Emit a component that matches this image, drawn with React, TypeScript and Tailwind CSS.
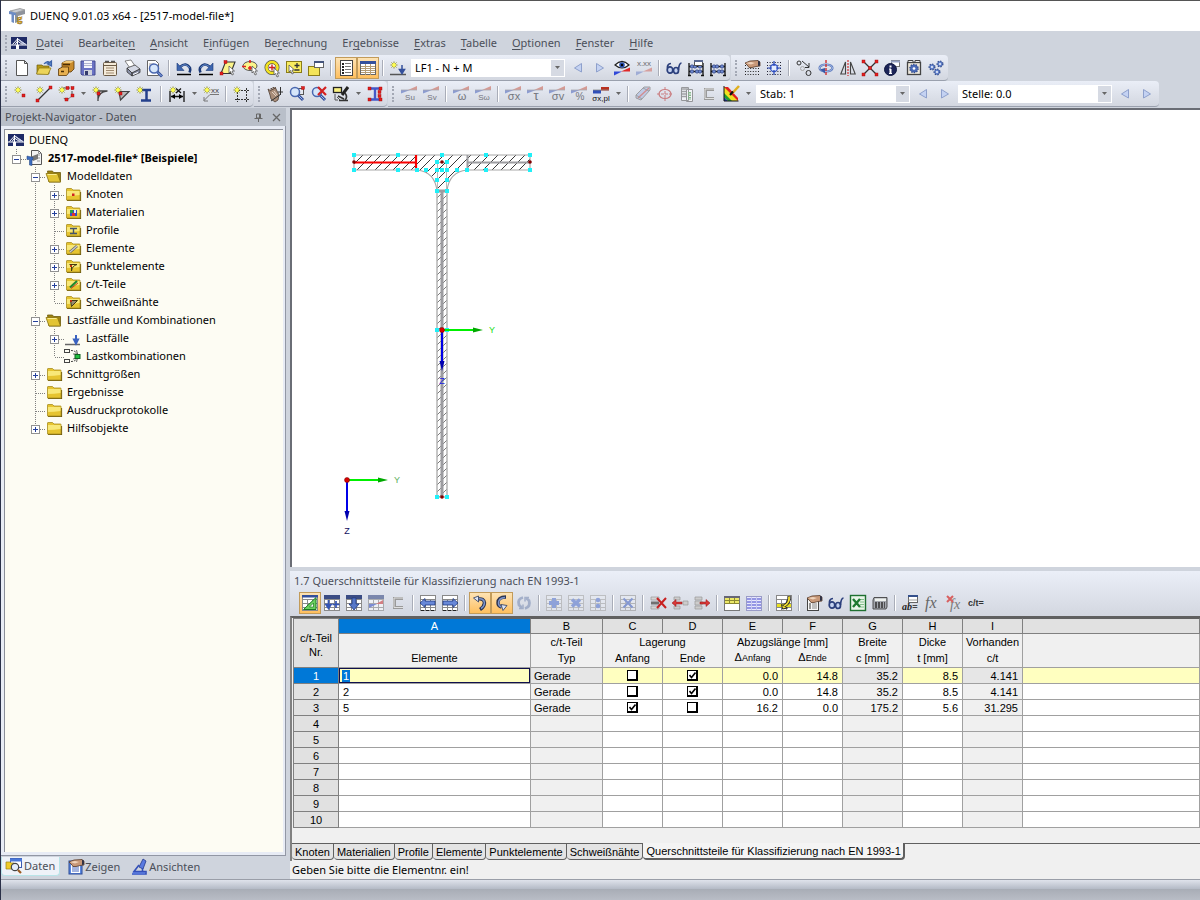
import type { ReactNode } from "react";

/* ---------- icon building blocks (16 x 16 grid) ---------- */

const Star = ({ x = 4, y = 4 }: { x?: number; y?: number }) => (
  <g>
    <path
      d={`M${x - 3.5} ${y}h7M${x} ${y - 3.5}v7M${x - 2.5} ${y - 2.5}l5 5M${x + 2.5} ${y - 2.5}l-5 5`}
      stroke="#8c8c1c"
      strokeWidth=".9"
    />
    <circle cx={x} cy={y} r="1.900" fill="#ffff50" />
  </g>
);

const Red = ({ at }: { at: number[][] }) => (
  <>
    {at.map(([x, y]) => (
      <rect key={`${x}-${y}`} x={x} y={y} width="3" height="3" fill="#e02020" stroke="#a00000" strokeWidth=".4" />
    ))}
  </>
);

const Cursor = ({ x = 8, y = 6 }: { x?: number; y?: number }) => (
  <path d={`M${x} ${y}v7l1.500-1.500 1.500 3.500 1.500-.7-1.500-3.300h2.500z`} fill="#fff" stroke="#555" strokeWidth=".8" />
);

const Lens = ({ x = 7, y = 6 }: { x?: number; y?: number }) => (
  <g>
    <path d={`M${x + 3} ${y + 3}l5 5`} stroke="#34509c" strokeWidth="3" />
    <path d={`M${x + 4} ${y + 4}l3.500 3.500`} stroke="#9cb8ec" strokeWidth="1" />
    <circle cx={x} cy={y} r="4.500" fill="#d6e6fa" stroke="#4a68b0" strokeWidth="1.500" />
  </g>
);

const Grid = ({ fill = "#fff", line = "#8a8a8a" }: { fill?: string; line?: string }) => (
  <g shapeRendering="crispEdges">
    <rect x=".5" y=".5" width="15" height="15" fill={fill} stroke={line} />
    <path d="M.5 4.500h15M.5 8.500h15M.5 12.500h15M5.500 4v12M10.500 4v12" stroke={line} />
  </g>
);

const GridTop = () => (
  <g>
    <Grid />
    <rect x="0" y="0" width="16" height="4" fill="#3a4c84" />
  </g>
);

const Wedge = ({ children }: { children: ReactNode }) => (
  <g>
    <path d="M0 4h9L0 7.500z" fill="#8c9cd0" />
    <path d="M7 4L16 0v4z" fill="#d49a94" />
    <path d="M0 4h16" stroke="#a8a8b0" strokeWidth=".8" />
    {children}
  </g>
);

const Sym = ({ t, size = 9 }: { t: string; size?: number }) => (
  <text x="9" y="14" fontSize={size} textAnchor="middle" fill="#74777e" fontFamily="Liberation Sans, sans-serif">
    {t}
  </text>
);

const Abacus = ({ y = 3 }: { y?: number }) => (
  <g>
    <path d={`M1 ${y}v13M15 ${y}v13M0 15.500h3M13 15.500h3M1 ${y + 3}.500h14M1 ${y + 8}.500h14`} stroke="#111" strokeWidth="1.300" />
    {[4, 7, 12].map((x) => (
      <circle key={x} cx={x} cy={y + 3.5} r="1.700" fill="#6f8ad0" stroke="#203070" strokeWidth=".6" />
    ))}
    {[4, 9, 12].map((x) => (
      <circle key={x} cx={x} cy={y + 8.5} r="1.700" fill="#6f8ad0" stroke="#203070" strokeWidth=".6" />
    ))}
  </g>
);

const Gear = ({ x, y, r, fill = "#6c8cd4" }: { x: number; y: number; r: number; fill?: string }) => (
  <g>
    <circle cx={x} cy={y} r={r} fill="none" stroke="#2c4888" strokeWidth="1.600" strokeDasharray="1.300 1.200" />
    <circle cx={x} cy={y} r={r - 0.3} fill={fill} stroke="#35519a" strokeWidth=".6" />
    <circle cx={x} cy={y} r={r / 3} fill="#fff" />
  </g>
);

const Dots = () => (
  <path
    d="M1 5.500h14M1 8.500h14M1 11.500h14M1 14.500h14"
    stroke="#222"
    strokeDasharray="1 1.600"
  />
);

const Hand = ({ y = 0 }: { y?: number }) => (
  <g>
    <path d={`M1 ${y + 3}l5-2 8-.5 2 2v3.500l-4 .5-4 1-3 0-1-1.500z`} fill="#c89878" stroke="#5a3c2a" strokeWidth=".8" />
    <path d={`M2 ${y + 3}l5-1 4 1-4 1.500z`} fill="#f0d4bc" />
    <path d={`M14 ${y}.5l2 1v4l-2 .5z`} fill="#334" />
  </g>
);

const GlassesShape = () => (
  <g fill="#c4d2f0" stroke="#2b3f7c" strokeWidth="1.700">
    <ellipse cx="4" cy="10" rx="2.800" ry="3.200" />
    <ellipse cx="10" cy="10.500" rx="2.500" ry="3" />
    <path d="M1.500 8Q1 4 5 3.500M12.500 10Q13 3 15.500 3M6.500 10h1" fill="none" />
  </g>
);

const FolderBase = ({ children }: { children?: ReactNode }) => (
  <g>
    <path d="M2 14.500h13.500V6" stroke="#6e5c10" strokeWidth="1.200" fill="none" />
    <path d="M1.500 3q0-.5.5-.5h4.500l1.500 1.500h6.500q.5 0 .5.500v9.500h-13.500z" fill="#e6c430" stroke="#a88e20" strokeWidth=".8" />
    <path d="M2 5h12.500v4Q8 10 2 10z" fill="#f8e878" />
    {children}
  </g>
);

const ICONS: Record<string, ReactNode> = {
  app: (
    <g>
      <path d="M1 3l10-2.500 5 1.500-10 3z" fill="#c9ccd2" stroke="#777" strokeWidth=".6" />
      <path d="M6 5l10-3v4L9 8v6l-3 1z" fill="#8e939c" />
      <path d="M0 3l7 2v2.500L5 7v8l-2.500-1V6.500L0 6z" fill="#6d8cc4" />
      <text x="8" y="14" fontSize="11" fontWeight="bold" fill="#e0a81c" stroke="#7a5a10" strokeWidth=".3" fontFamily="Liberation Serif, serif">g</text>
    </g>
  ),
  bridge: (
    <g>
      <rect x="0" y="2" width="16" height="12" fill="#1f2b66" />
      <path d="M0 10h16M6.500 3v11M1.500 9.500L6.500 4l8.500 5.500M4 9.500L6.500 6l5 3.500" stroke="#fff" strokeWidth="1" fill="none" />
      <path d="M6.500 3L15 9.500h-3z" fill="#c8d0ea" />
      <path d="M5 10h3v4H5z" fill="#fff" />
    </g>
  ),
  new: <path d="M2.500.5h8l3 3v12h-11zM10.500.5v3h3" fill="#fff" stroke="#555" />,
  open: (
    <g>
      <path d="M1 5h5l1 1h6v8H1z" fill="#b79a18" stroke="#6d5c0c" strokeWidth=".7" />
      <path d="M0.500 14L3 8h12l-3 6.500z" fill="#ecd458" stroke="#8a7410" strokeWidth=".7" />
      <path d="M8 4q3-4 6-1M15.500 1v5l-4-2z" stroke="#3c62a8" strokeWidth="1.200" fill="#5a86c8" />
    </g>
  ),
  archive: (
    <g>
      <path d="M4 3l4-2h8v8l-3 3H4z" fill="#c98b2c" stroke="#5b3808" strokeWidth=".8" />
      <path d="M8 1h8l-3 2H4z" fill="#f0c878" />
      <path d="M0.500 9l4-2h6v6l-2 2.500h-8z" fill="#e7b050" stroke="#5b3808" strokeWidth=".8" />
      <path d="M5 4.500h7M3 11.500h3" stroke="#4a2e06" strokeWidth="1.400" />
    </g>
  ),
  save: (
    <g>
      <path d="M1 1h14v14H2l-1-1z" fill="#6a72c4" stroke="#444a90" />
      <rect x="4" y="1" width="8" height="7" fill="#f4f4fb" />
      <path d="M4 3.500h8M4 5.500h8" stroke="#b0b4d0" />
      <rect x="4" y="10" width="8" height="5" fill="#d0d3dc" />
      <rect x="5" y="11" width="3" height="4" fill="#343a6c" />
    </g>
  ),
  notes: (
    <g>
      <rect x="1.500" y="2.500" width="13" height="13" rx="1" fill="#f4ead8" stroke="#6b5a44" />
      <path d="M1 5.500h14" stroke="#6b5a44" />
      <path d="M3 1.500h4M9 1.500h4" stroke="#555" strokeWidth="1.500" />
      <path d="M4 8h8M4 10.500h8M4 13h8" stroke="#a08a70" />
    </g>
  ),
  print: (
    <g>
      <path d="M1 1l6-1 4 6-5 2z" fill="#fff" stroke="#666" strokeWidth=".8" />
      <path d="M3 8l8-3 5 4-8 4z" fill="#d4d8e4" stroke="#444" strokeWidth=".8" />
      <path d="M3 8v4l5 4v-3zM8 13v3l8-3.500V9z" fill="#8c93aa" stroke="#333" strokeWidth=".8" />
      <path d="M9 14.500l5-2" stroke="#fff" />
    </g>
  ),
  preview: (
    <g>
      <path d="M1.500.5h8l3 3v12h-11z" fill="#fff" stroke="#666" />
      <path d="M3 4h5M3 6h7M3 8h4" stroke="#999" />
      <Lens x={8} y={8.5} />
    </g>
  ),
  undo: (
    <g>
      <path d="M4 7Q10 1.500 14 8q.8 2-.5 4.500" stroke="#1c3a78" strokeWidth="2.600" fill="none" />
      <path d="M4 7Q10 2 13.500 8" stroke="#6c94d4" strokeWidth="1" fill="none" />
      <path d="M1 3v7.500h7z" fill="#3d66b0" stroke="#1c3a78" strokeWidth=".6" />
      <path d="M1 14.500h14" stroke="#000" strokeWidth="1.500" />
    </g>
  ),
  redo: (
    <g>
      <path d="M12 7Q6 1.500 2 8q-.8 2 .5 4.500" stroke="#1c3a78" strokeWidth="2.600" fill="none" />
      <path d="M12 7Q6 2 2.500 8" stroke="#6c94d4" strokeWidth="1" fill="none" />
      <path d="M15 3v7.500H8z" fill="#3d66b0" stroke="#1c3a78" strokeWidth=".6" />
      <path d="M1 14.500h14" stroke="#000" strokeWidth="1.500" />
    </g>
  ),
  selPar: (
    <g>
      <path d="M5.500 2h9.500L10.500 13.500H1z" fill="#fbf48a" stroke="#333" strokeWidth="1.100" />
      <Red at={[[4, 0.5], [0, 12]]} />
      <Cursor x={9} y={6} />
    </g>
  ),
  selEll: (
    <g>
      <ellipse cx="8" cy="6" rx="7" ry="4.500" fill="#fbf48a" stroke="#555" />
      <path d="M0 6.500h4M8 0v3M6 8h4M8 6v4" stroke="#e02020" strokeWidth="1.600" />
      <Cursor x={10} y={6} />
    </g>
  ),
  selRing: (
    <g>
      <circle cx="8" cy="7.500" r="5.500" fill="#fff" stroke="#554" strokeWidth="4" />
      <circle cx="8" cy="7.500" r="5.500" fill="none" stroke="#f4e420" strokeWidth="2.600" />
      <path d="M8 4.500v6M5 7.500h6" stroke="#d02020" strokeWidth="1.400" />
      <Cursor x={10} y={8} />
    </g>
  ),
  selPlus: (
    <g>
      <rect x=".5" y="1.500" width="15" height="11" fill="#f8ec60" stroke="#8a7c18" />
      <path d="M11 3v5M8.500 5.500h5M8.500 10h5" stroke="#333" strokeWidth="1.300" />
      <Cursor x={3} y={5} />
    </g>
  ),
  windows: (
    <g>
      <rect x=".5" y="6.500" width="11" height="9" fill="#f4e458" stroke="#8a7c18" />
      <rect x="6.500" y="1.500" width="9" height="6" fill="#fff" stroke="#666" />
      <path d="M6 2h10" stroke="#44547c" strokeWidth="2" />
    </g>
  ),
  listPane: (
    <g shapeRendering="crispEdges">
      <rect x="2.500" y=".5" width="12" height="15" fill="#fff" stroke="#444" />
      <path d="M4 3.500h2M4 6.500h2M4 9.500h2M4 12.500h2" stroke="#222" strokeWidth="2" />
      <path d="M7 3.500h6M7 6.500h6M7 9.500h6M7 12.500h6" stroke="#777" />
    </g>
  ),
  tablePane: (
    <g shapeRendering="crispEdges">
      <rect x=".5" y="1.500" width="15" height="13" fill="#fff" stroke="#666" />
      <rect x="0" y="1" width="16" height="3" fill="#34509c" />
      <path d="M1 6.500h14M1 8.500h14M1 10.500h14M1 12.500h14M5.500 4v11M10.500 4v11" stroke="#b49c74" />
    </g>
  ),
  newLoad: (
    <g>
      <Star x={4} y={5} />
      <path d="M0 14.500h16" stroke="#555" strokeWidth="1.500" />
      <path d="M12 5v5M9.500 9.500l2.500 4 2.500-4z" stroke="#34509c" strokeWidth="1.500" fill="#34509c" />
    </g>
  ),
  prev: <path d="M11.500 3.500v8.500L4.500 8z" fill="#c4d2f2" stroke="#8ea0cc" />,
  next: <path d="M4.500 3.500v8.500l7-4z" fill="#c4d2f2" stroke="#8ea0cc" />,
  eye: (
    <g>
      <path d="M0 11.500h8L0 15.500z" fill="#3048d8" />
      <path d="M7 11.500L16 7.500v4z" fill="#e02828" />
      <path d="M1 5q7-7 14 0q-7 6-14 0z" fill="#fff" stroke="#222" strokeWidth="1.200" />
      <circle cx="8" cy="5" r="2.800" fill="#2850b0" />
      <circle cx="8" cy="5" r="1.200" fill="#000" />
    </g>
  ),
  xxx: (
    <g opacity=".75">
      <text x="8" y="6" fontSize="8" textAnchor="middle" fill="#444" fontFamily="Liberation Sans, sans-serif">x.xx</text>
      <path d="M0 11.500h8L0 15.500z" fill="#8c9cd0" />
      <path d="M7 11.500L16 7.500v4z" fill="#d48a84" />
    </g>
  ),
  glasses: <GlassesShape />,
  abacusWin: (
    <g>
      <Abacus />
      <rect x="6.500" y=".5" width="8" height="5" fill="#fff" stroke="#555" />
      <path d="M6 1h9" stroke="#5a6890" strokeWidth="2" />
    </g>
  ),
  abacus: <Abacus />,
  gridHand: (
    <g>
      <Dots />
      <Hand />
    </g>
  ),
  gridSnap: (
    <g>
      <path d="M1 2.500h14M1 5.500h14M1 8.500h14M1 11.500h14M1 14.500h14" stroke="#223" strokeDasharray="1 1.600" />
      <circle cx="8" cy="8" r="3.500" fill="#e4ecff" stroke="#3858c8" strokeWidth="1.300" />
      <path d="M8 1v5M8 10v5M1 8h5M10 8h5" stroke="#2848b8" strokeWidth="1.200" />
    </g>
  ),
  move: (
    <g fill="none" stroke="#333">
      <circle cx="3" cy="3" r="2" />
      <circle cx="12.500" cy="13" r="2.500" />
      <circle cx="6.500" cy="8.500" r="2" stroke="#aaa" />
      <path d="M6 1l7 6M13 3v4.500H9" />
    </g>
  ),
  rotate: (
    <g fill="none">
      <ellipse cx="8" cy="8" rx="6.500" ry="3.500" stroke="#5a78bc" strokeWidth="2.200" />
      <ellipse cx="8" cy="8" rx="6.500" ry="3.500" stroke="#b4c6ec" strokeWidth=".8" />
      <path d="M2 9.500l5-1.500v5.500z" fill="#3a5aa8" />
      <path d="M8 0v16" stroke="#d02020" strokeWidth="1.300" strokeDasharray="3 1" />
    </g>
  ),
  mirror: (
    <g fill="none" stroke="#444" strokeWidth="1.100">
      <path d="M5.500 2v12H.8zM10.500 2v12h4.700z" />
      <path d="M8 0v16" stroke="#d02020" strokeDasharray="2 1" />
    </g>
  ),
  explode: (
    <g>
      <path d="M1 1l14 14M15 1L1 15" stroke="#333" strokeWidth="1.300" />
      <Red at={[[0, 0], [13, 0], [0, 13], [13, 13], [6.5, 6.5]]} />
    </g>
  ),
  info: (
    <g>
      <rect x="7.500" y=".5" width="8" height="6" fill="#fff" stroke="#777" />
      <path d="M7 1.500h9" stroke="#98a4c4" strokeWidth="2" />
      <circle cx="6.500" cy="9.500" r="6" fill="#1c2458" stroke="#101840" />
      <path d="M6.500 5.500v2M6.500 9v4.500" stroke="#fff" strokeWidth="2" />
      <path d="M5 9h2M5 13.500h3" stroke="#fff" />
    </g>
  ),
  settings: (
    <g>
      <rect x="1.500" y="2.500" width="13" height="12" fill="#eee8dc" stroke="#444" strokeWidth="1.300" />
      <path d="M2 2V.5h5V2M9 2V.5h5V2" stroke="#444" fill="#eee" />
      <Gear x={8} y={8.5} r={4} fill="#4c6cb8" />
    </g>
  ),
  gears: (
    <g>
      <Gear x={4} y={7} r={2.7} />
      <Gear x={12} y={4} r={2.7} />
      <Gear x={9} y={12} r={2.7} />
    </g>
  ),
  nNode: (
    <g>
      <Star x={4} y={4} />
      <Red at={[[8, 8]]} />
    </g>
  ),
  nLine: (
    <g>
      <path d="M2 14L14 2" stroke="#333" strokeWidth="1.200" />
      <Star x={4} y={4} />
      <Red at={[[0, 13], [13, 0]]} />
    </g>
  ),
  nPoly: (
    <g>
      <path d="M5 2h9v8l-5 4-4-2" stroke="#555" fill="none" strokeDasharray="3 1" />
      <Star x={4} y={4} />
      <Red at={[[8, 0.5], [13, 0.5], [13, 8], [7, 12]]} />
    </g>
  ),
  nTriA: (
    <g>
      <path d="M3 5h12.500M6 15V7M6 13Q7 6 15 5" stroke="#444" strokeWidth="1.300" fill="none" />
      <Star x={4} y={4} />
      <Red at={[[5, 6]]} />
    </g>
  ),
  nTriB: (
    <g>
      <path d="M5 5.500h10L6.500 14z" stroke="#444" strokeWidth="1.200" fill="#b8b8b8" />
      <Star x={4} y={4} />
      <Red at={[[5, 6]]} />
    </g>
  ),
  nSec: (
    <g>
      <path d="M6 4h9M5 14.500h10M10.500 4v11" stroke="#24408c" strokeWidth="2.500" />
      <Star x={4} y={4} />
    </g>
  ),
  nDim: (
    <g>
      <path d="M1 5v11M15 5v11M2 10.500h12M7 7l5-4.500M12 7L7 2.500" stroke="#111" strokeWidth="1.300" />
      <path d="M2 10.500l4-2.500v5zM14 10.500l-4-2.500v5z" />
      <Star x={4} y={4} />
    </g>
  ),
  nLabel: (
    <g>
      <path d="M16 8.500H7l-6 6M1 11v4h4" stroke="#777" fill="none" />
      <text x="8" y="7" fontSize="8" fill="#444" fontFamily="Liberation Sans, sans-serif">xx</text>
      <Star x={4} y={4} />
    </g>
  ),
  nGrid: (
    <g>
      <path d="M4.500 3v13M13.500 2v14M2 4.500h14M2 13.500h14" stroke="#333" strokeDasharray="2 1" />
      <Star x={4} y={4} />
    </g>
  ),
  pan: (
    <g>
      <path d="M1 3l3 2V2l2 2V1l2 2V1l2 4 2 4-1 5-3 2-4-3L3 9z" fill="#a88c78" stroke="#4e3e32" strokeWidth=".8" />
      <path d="M5 6l4 4M7 5l3 4" stroke="#e4d2c4" />
      <path d="M13.500 1v8M11 6h5M4 15L14 8" stroke="#333" fill="none" />
    </g>
  ),
  zoomWin: (
    <g>
      <rect x="6.500" y="2.500" width="8" height="6" fill="#e4e8f0" stroke="#555" />
      <Lens x={6} y={6} />
      <Red at={[[12.5, 0.5]]} />
    </g>
  ),
  zoomX: (
    <g>
      <Lens x={6} y={6} />
      <path d="M7 1l8 8M15 1L7 9" stroke="#d42020" strokeWidth="2.200" />
    </g>
  ),
  scale: (
    <g>
      <rect x=".5" y="1.500" width="8" height="5" fill="#f8f080" stroke="#222" strokeWidth="1.300" />
      <path d="M15 1l-6 8" stroke="#222" strokeWidth="3" />
      <path d="M6 14.500h9M12 7q3 4 0 7M5 10l6 3" stroke="#333" strokeWidth="1.600" fill="none" />
      <path d="M2 8v6h3M4 11l3 3" stroke="#555" fill="none" />
    </g>
  ),
  section: (
    <g>
      <path d="M3 2.500h10M3 13.500h10M8 3v10" stroke="#4458c8" strokeWidth="2.400" />
      <Red at={[[1, 1], [12, 1], [1, 12], [12, 12], [11, 4.5], [11, 8.5]]} />
    </g>
  ),
  su: <Wedge><Sym t="Su" size={8} /></Wedge>,
  sv: <Wedge><Sym t="Sv" size={8} /></Wedge>,
  omega: <Wedge><Sym t="ω" size={11} /></Wedge>,
  somega: <Wedge><Sym t="Sω" size={8} /></Wedge>,
  sigx: <Wedge><Sym t="σx" size={11} /></Wedge>,
  tau: <Wedge><Sym t="τ" size={13} /></Wedge>,
  sigv: <Wedge><Sym t="σv" size={11} /></Wedge>,
  pct: <Wedge><Sym t="%" size={10} /></Wedge>,
  plastic: (
    <g>
      <path d="M8 1h8v3.500H8z" fill="#b83020" />
      <path d="M0 4h8v3.500H0z" fill="#3050b8" />
      <path d="M0 4h16" stroke="#888" strokeWidth=".8" />
      <text x="8" y="15" fontSize="8" textAnchor="middle" fill="#111" fontFamily="Liberation Sans, sans-serif">σx,pl</text>
    </g>
  ),
  plate: (
    <g opacity=".75">
      <path d="M1 9L9 1h6v3l-9 10-5-2z" fill="#b4c2e4" stroke="#888" />
      <path d="M3 12L14 2" stroke="#d07070" strokeWidth="1.400" />
      <path d="M1 9l6 4M8 2l6 3" stroke="#888" />
    </g>
  ),
  target: (
    <g opacity=".65" fill="none">
      <ellipse cx="8" cy="8" rx="6" ry="4.500" stroke="#c04848" strokeWidth="1.200" />
      <path d="M8 1v14M0 8h16" stroke="#c04848" strokeDasharray="3 1" />
    </g>
  ),
  report: (
    <g opacity=".6">
      <path d="M2.500 1.500h7v13h-7zM7.500 3.500h6v12h-6z" fill="#fff" stroke="#666" />
      <path d="M3 3h6M3 5.500h4M3 8h4M3 10.500h4" stroke="#777" strokeWidth="1.500" />
      <path d="M10.500 6v8" stroke="#50a050" strokeWidth="3" strokeDasharray="1.500 1" />
    </g>
  ),
  bracket: (
    <g fill="none">
      <path d="M13 3.500H4.500v9H13" stroke="#9a9a9a" strokeWidth="3" />
      <path d="M13 3H4v9.500h9" stroke="#e0e0e0" strokeWidth="1" />
    </g>
  ),
  colors: (
    <g>
      <path d="M1 1h3l11 14H1z" fill="#f0e020" />
      <path d="M1 1h4l10 11v3z" fill="#e02020" />
      <path d="M1 3l12 12H8L1 8z" fill="#f0e020" />
      <path d="M1 7l8 8H5L1 11z" fill="#20a030" />
      <path d="M1 11l4 4H1z" fill="#2040c0" />
      <path d="M1 0v15h14.500" stroke="#111" fill="none" />
      <path d="M16 0L9.500 7" stroke="#e0b020" strokeWidth="2.500" />
      <path d="M10 5.500L7 9" stroke="#111" strokeWidth="2.200" />
    </g>
  ),
  tTri: (
    <g>
      <Grid />
      <path d="M1.500 14.500L14 2.500v12z" fill="#6cd060" stroke="#1c7a20" />
      <path d="M7.500 12L11.500 8v4z" fill="#fff" stroke="#1c7a20" strokeWidth=".7" />
      <rect x="0" y="0" width="16" height="2.500" fill="#34509c" />
    </g>
  ),
  tIns: (
    <g>
      <GridTop />
      <path d="M4.500 5v6M2 9.500l2.500 4 2.500-4zM12 6v7M8.500 9.500h7" stroke="#3454b4" strokeWidth="1.700" fill="#3454b4" />
    </g>
  ),
  tDown: (
    <g>
      <GridTop />
      <path d="M6 3h4v6h3l-5 6-5-6h3z" fill="#5878c8" stroke="#203880" strokeWidth=".8" />
    </g>
  ),
  tChart: (
    <g opacity=".6">
      <GridTop />
      <path d="M1 9h8l-8 4z" fill="#4058c8" />
      <path d="M8 9l7-4v4z" fill="#d04040" />
    </g>
  ),
  tLeft: (
    <g>
      <Grid line="#888" />
      <path d="M0 8l5-4.500V6h10v4H5v2.500z" fill="#6888d8" stroke="#203880" strokeWidth=".8" />
      <path d="M1 15.500h14" stroke="#222" strokeDasharray="3 2" />
    </g>
  ),
  tRight: (
    <g>
      <Grid line="#888" />
      <path d="M16 8l-5-4.500V6H1v4h10v2.500z" fill="#6888d8" stroke="#203880" strokeWidth=".8" />
      <path d="M1 15.500h14" stroke="#222" strokeDasharray="3 2" />
    </g>
  ),
  curveR: (
    <g fill="none">
      <path d="M6 4q6-1 6.500 4Q12 12 8 14.500" stroke="#2c3450" strokeWidth="3.400" />
      <path d="M6 4q6-1 6.500 4Q12 12 9 13.500" stroke="#7c94cc" strokeWidth="1.500" />
      <path d="M6.500 1v6L1.500 3z" fill="#dfe6f6" stroke="#3c4868" strokeWidth=".9" />
    </g>
  ),
  curveL: (
    <g fill="none">
      <path d="M12 2Q4 2 4 8q0 3 3.500 4" stroke="#2c3450" strokeWidth="3.400" />
      <path d="M11 2.500Q4.500 3 4.500 8q0 3 3 4" stroke="#7c94cc" strokeWidth="1.500" />
      <path d="M7 9.500l6 1-4 5z" fill="#dfe6f6" stroke="#3c4868" strokeWidth=".9" />
    </g>
  ),
  refresh: (
    <g opacity=".5" fill="none" stroke="#6c80ac" strokeWidth="2.800">
      <path d="M7 2.500Q1 4 3 10l3 3M9 13.500q6-2 4-8L10 3" />
      <path d="M3 13.500h4V9.500M13 2.500H9v4" strokeWidth="1.500" />
    </g>
  ),
  gPlus: (
    <g opacity=".6">
      <Grid fill="#e8ebf2" line="#a8a8a8" />
      <path d="M8 3v10M3 8h10" stroke="#5c7ad0" strokeWidth="4" />
    </g>
  ),
  gStar: (
    <g opacity=".6">
      <Grid fill="#e8ebf2" line="#a8a8a8" />
      <path d="M4 4.500l8 7M12 4.500l-8 7" stroke="#5c7ad0" strokeWidth="3.600" />
    </g>
  ),
  gPair: (
    <g opacity=".6">
      <Grid fill="#e8ebf2" line="#a8a8a8" />
      <circle cx="8" cy="5" r="2.300" fill="#5c7ad0" />
      <circle cx="8" cy="11" r="2.300" fill="#5c7ad0" />
    </g>
  ),
  gX: (
    <g opacity=".6">
      <Grid fill="#e8ebf2" line="#999" />
      <path d="M3.500 3.500l9 9M12.500 3.500l-9 9" stroke="#4c6ac4" strokeWidth="2" />
    </g>
  ),
  delRow: (
    <g>
      <path d="M1 2h8v3H1zM1 11h8v3H1z" fill="#d4d4d4" stroke="#999" strokeWidth=".7" />
      <path d="M1 6.500h8v3H1z" fill="#707070" />
      <path d="M7 3l9 10M16 3L7 13" stroke="#c82020" strokeWidth="2" />
    </g>
  ),
  rowL: (
    <g>
      <path d="M2 2h6v3H2zM2 11h6v3H2zM11 6h5v4h-5z" fill="#ccc" stroke="#999" strokeWidth=".7" />
      <path d="M0 8l4-3.500V7h6v2H4v2.500z" fill="#d83838" stroke="#901010" strokeWidth=".5" />
    </g>
  ),
  rowR: (
    <g>
      <path d="M1 2h7v3H1zM1 11h7v3H1zM1 6h7v4H1z" fill="#ccc" stroke="#999" strokeWidth=".7" />
      <path d="M16 8l-4-3.500V7H6v2h6v2.500z" fill="#d83838" stroke="#901010" strokeWidth=".5" />
    </g>
  ),
  tYellow: (
    <g shapeRendering="crispEdges">
      <rect x=".5" y="1.500" width="15" height="14" fill="#fff" stroke="#777" />
      <rect x="1" y="2" width="14" height="6" fill="#ece868" />
      <path d="M1 5.500h14M1 8.500h14M5.500 2v6M10.500 2v6" stroke="#8c8830" />
      <rect x="0" y="1" width="16" height="2" fill="#667" />
    </g>
  ),
  tBlue: (
    <g shapeRendering="crispEdges">
      <rect x=".5" y="1.500" width="15" height="14" fill="#e8e8fc" stroke="#9a9cc8" />
      <path d="M1 3.500h14M1 6.500h14M1 9.500h14M1 12.500h14" stroke="#9496e4" strokeWidth="2" />
      <path d="M5.500 2v13M10.500 2v13" stroke="#c8caf0" />
    </g>
  ),
  tEdit: (
    <g>
      <Grid line="#888" />
      <rect x="1" y="9" width="14" height="3" fill="#e8e020" />
      <path d="M13 1q1 7-5 10" stroke="#222" strokeWidth="3.400" fill="none" />
      <path d="M5.500 9.500l1 4.500 5-1z" fill="#f4e030" stroke="#222" />
      <path d="M13 1.500q1 6.500-5 9.500" stroke="#f4e030" strokeWidth="1.800" fill="none" />
    </g>
  ),
  props: (
    <g>
      <rect x="1.500" y="3.500" width="11" height="12" fill="#f8f8f8" stroke="#444" />
      <path d="M3 9h2M3 11h2M3 13h2" stroke="#333" strokeWidth="1.200" />
      <path d="M6 9h5M6 11h5M6 13h5" stroke="#888" />
      <Hand />
    </g>
  ),
  excel: (
    <g>
      <rect x=".5" y=".5" width="15" height="15" fill="#e8f5e8" stroke="#1e7030" strokeWidth="1.400" />
      <path d="M10 4.500h4M10 7h4M10 9.500h4M10 12h4" stroke="#6ab074" strokeWidth=".8" />
      <path d="M3 4l7 8M10 4L3 12" stroke="#1e7a30" strokeWidth="2.400" />
    </g>
  ),
  calc: (
    <g>
      <path d="M2 2.500h13v9.500l-1 2H1V5z" fill="#a4a7ae" stroke="#444" strokeWidth=".9" />
      <rect x="3" y="3.500" width="11" height="2.500" fill="#eef2ee" />
      <path d="M3 8h10M3 10h10M3 12h10" stroke="#333" strokeWidth="1.300" strokeDasharray="2 1" />
    </g>
  ),
  abEq: (
    <g>
      <rect x="6.500" y=".5" width="9" height="7" fill="#fff" stroke="#666" />
      <path d="M6 1h10" stroke="#34508c" strokeWidth="2" />
      <path d="M6 5h10" stroke="#888" strokeWidth=".8" />
      <text x="0" y="15" fontSize="10" fontWeight="bold" fontStyle="italic" fill="#222" fontFamily="Liberation Serif, serif">ab=</text>
    </g>
  ),
  fx: (
    <text x="1" y="13" fontSize="16" fontStyle="italic" fill="#666" fontFamily="Liberation Serif, serif">fx</text>
  ),
  xfx: (
    <g>
      <text x="4" y="14" fontSize="14" fontStyle="italic" fill="#777" fontFamily="Liberation Serif, serif">fx</text>
      <path d="M1 1l6 6M7 1L1 7" stroke="#d86060" strokeWidth="2" />
    </g>
  ),
  ct: (
    <text x="8" y="11" fontSize="9" textAnchor="middle" fontWeight="bold" fill="#333" fontFamily="Liberation Sans, sans-serif">c/t=</text>
  ),
  folder: <FolderBase />,
  folderOpen: (
    <g>
      <path d="M1.500 3h5l1 1.500h7V14H3z" fill="#a08410" stroke="#6d5c0c" strokeWidth=".8" />
      <path d="M0 5.500h11.500l3 8.500H3z" fill="#e2c434" stroke="#8a7410" strokeWidth=".8" />
      <path d="M1.500 6.500h9" stroke="#f8ec90" />
    </g>
  ),
  fNode: <FolderBase><rect x="7" y="7.500" width="2.500" height="2.500" fill="#d02020" /></FolderBase>,
  fMat: (
    <FolderBase>
      <rect x="5" y="6" width="7" height="6" fill="#3850c0" />
      <path d="M5 6h3v3H5z" fill="#30a040" />
      <path d="M7 9h3v3H7z" fill="#e03030" />
      <path d="M9 6h2v3H9z" fill="#e8e8f8" />
    </FolderBase>
  ),
  fProf: <FolderBase><path d="M5 6.500h7M5 11.500h7M8.500 6.500v5" stroke="#44546c" strokeWidth="1.400" /></FolderBase>,
  fElem: <FolderBase><path d="M5 12L12 6" stroke="#666" strokeWidth="2.800" /><path d="M5 12L12 6" stroke="#ccc" strokeWidth="1.200" /></FolderBase>,
  fPoint: <FolderBase><path d="M4.500 6.500H12Q7 8 6.500 13V7" stroke="#443a10" fill="none" /><rect x="5" y="7" width="2" height="2" fill="#c03010" /></FolderBase>,
  fCt: <FolderBase><path d="M5 11.500L12 5" stroke="#208830" strokeWidth="2.200" /><path d="M6 12.500L13 7" stroke="#d04020" /></FolderBase>,
  fWeld: <FolderBase><path d="M5.500 6.500h7l-6 6z" fill="#988c70" stroke="#443a10" /><rect x="5" y="6" width="2" height="2" fill="#c03010" /></FolderBase>,
  file: (
    <g>
      <path d="M4.500.5h7l3 3v11h-10z" fill="#f4f4f4" stroke="#555" />
      <path d="M10 5h3M10 8h3M10 11h3M11.500.5v3h3" stroke="#999" fill="none" />
      <path d="M3 7l8-3v5l-5 2z" fill="#777" />
      <path d="M0 6l6 1.500v2H5v6l-2.500-.5V9.500H0z" fill="#3a6cc0" stroke="#2c4c88" strokeWidth=".6" />
    </g>
  ),
  load: (
    <g>
      <path d="M0 14.500h15" stroke="#666" strokeWidth="1.500" />
      <path d="M11 5v5M9 9.500l2 4 2-4z" stroke="#3a62c0" strokeWidth="2" fill="#3a62c0" />
    </g>
  ),
  combo: (
    <g fill="none" stroke="#444">
      <rect x="-.5" y="1.500" width="5" height="3" />
      <rect x="-.5" y="11.500" width="5" height="3" />
      <path d="M6 2.500q4 0 6 3M6 13.500q4 0 6-3" strokeDasharray="2 1" />
      <path d="M8 6l4.500 0-1-4M8 11l4.500-1-1 4" strokeWidth=".8" />
      <rect x="10" y="6.500" width="5" height="4" fill="#20c040" stroke="#106020" />
    </g>
  ),
  navData: (
    <g>
      <rect x="4.500" y=".5" width="11" height="9" fill="#fff" stroke="#3a5ab0" />
      <path d="M4 2h12" stroke="#4a78d8" strokeWidth="3" />
      <path d="M0 4h4l1 1h3v6H0z" fill="#f0cc28" stroke="#9a8114" strokeWidth=".7" />
      <circle cx="9" cy="9" r="3.700" fill="#e4eefb" stroke="#444" strokeWidth="1.200" />
      <path d="M12 12l3 3" stroke="#9a5a20" strokeWidth="2.200" />
    </g>
  ),
  navShow: (
    <g>
      <rect x="1" y="2" width="13" height="13" fill="#5a88e0" stroke="#2c4a98" />
      <rect x="3" y="6" width="9" height="8" fill="#fff" />
      <path d="M4 8h7M4 10h7M4 12h7" stroke="#4868c0" />
      <Hand />
    </g>
  ),
  navView: (
    <g>
      <path d="M11 0l3 2-3 8-4-2z" fill="#5a7ae0" stroke="#24388c" strokeWidth=".8" />
      <path d="M7 6l-5 6.500h12v2.500H0M10.500 9v3.500" stroke="#3450b8" strokeWidth="1.600" fill="none" />
      <path d="M1 13h12v2.500H0z" fill="#5474d8" />
    </g>
  ),
};

const Icon = ({ name }: { name: string }) => (
  <svg width="16" height="16" viewBox="0 0 16 16" className="block shrink-0 overflow-visible" aria-hidden="true">
    {ICONS[name]}
  </svg>
);

/* ---------- toolbar parts ---------- */

const Tool = ({ name, label, active = false }: { name: string; label?: string; active?: boolean }) => (
  <button
    type="button"
    aria-label={label ?? name}
    className={
      active
        ? "flex h-[22px] w-[22px] shrink-0 items-center justify-center border border-[#c29b5a] bg-gradient-to-b from-[#fde3b4] to-[#ffbf5c]"
        : "flex h-[22px] w-[22px] shrink-0 items-center justify-center"
    }
  >
    <Icon name={name} />
  </button>
);

const Tools = ({ names }: { names: string[] }) => (
  <>
    {names.map((n) => (
      <Tool key={n} name={n} />
    ))}
  </>
);

const Sep = ({ wide = false }: { wide?: boolean }) => (
  <span className={wide ? "flex w-[11px] shrink-0 justify-center" : "flex w-2 shrink-0 justify-center"}>
    <span className="h-4 w-0.5 border-r border-white bg-[#a9adb8]" />
  </span>
);

const Drop = () => (
  <button type="button" aria-label="Auswahl öffnen" className="flex h-[22px] w-3 shrink-0 items-center justify-center">
    <svg width="5" height="3" viewBox="0 0 5 3" aria-hidden="true">
      <path d="M0 0h5L2.500 3z" fill="#666" />
    </svg>
  </button>
);

const Grip = () => (
  <span className="flex w-[10px] shrink-0 justify-center">
    <span className="h-4 border-l-2 border-dotted border-[#a3a8b4]" />
  </span>
);

const Bar = ({ children }: { children: ReactNode }) => (
  <div className="flex h-[26px] shrink-0 items-center rounded-r-sm border-b border-[#9aa0ad] bg-gradient-to-b from-[#eaeef7] to-[#d3d7e0] pr-px">
    <Grip />
    {children}
  </div>
);

const Combo = ({ label, value }: { label: string; value: string }) => (
  <div className="relative mx-0.5 h-[18px] w-[154px] shrink-0 bg-white">
    <select aria-label={label} className="block h-full w-full appearance-none bg-white pl-1 text-[11px] leading-[18px] text-black">
      <option>{value}</option>
    </select>
    <span className="pointer-events-none absolute inset-y-px right-px flex w-[13px] items-center justify-center bg-[#d6dae3]">
      <svg width="5" height="3" viewBox="0 0 5 3" aria-hidden="true">
        <path d="M0 0h5L2.500 3z" fill="#666" />
      </svg>
    </span>
  </div>
);

/* ---------- menu ---------- */

const MENU: [string, string, string][] = [
  ["", "D", "atei"],
  ["Bearbeite", "n", ""],
  ["", "A", "nsicht"],
  ["E", "i", "nfügen"],
  ["Be", "r", "echnung"],
  ["Er", "g", "ebnisse"],
  ["", "E", "xtras"],
  ["", "T", "abelle"],
  ["", "O", "ptionen"],
  ["", "F", "enster"],
  ["", "H", "ilfe"],
];

/* ---------- project tree ---------- */

type Guide = "none" | "line" | "tee" | "end" | "plus" | "minus" | "plusEnd" | "minusEnd";
type Row = { guides: Guide[]; icon: string; text: string; bold?: boolean };

const TREE: Row[] = [
  { guides: [], icon: "bridge", text: "DUENQ" },
  { guides: ["minusEnd"], icon: "file", text: "2517-model-file* [Beispiele]", bold: true },
  { guides: ["none", "minus"], icon: "folderOpen", text: "Modelldaten" },
  { guides: ["none", "line", "plus"], icon: "fNode", text: "Knoten" },
  { guides: ["none", "line", "plus"], icon: "fMat", text: "Materialien" },
  { guides: ["none", "line", "tee"], icon: "fProf", text: "Profile" },
  { guides: ["none", "line", "plus"], icon: "fElem", text: "Elemente" },
  { guides: ["none", "line", "plus"], icon: "fPoint", text: "Punktelemente" },
  { guides: ["none", "line", "plus"], icon: "fCt", text: "c/t-Teile" },
  { guides: ["none", "line", "end"], icon: "fWeld", text: "Schweißnähte" },
  { guides: ["none", "minus"], icon: "folderOpen", text: "Lastfälle und Kombinationen" },
  { guides: ["none", "line", "plus"], icon: "load", text: "Lastfälle" },
  { guides: ["none", "line", "end"], icon: "combo", text: "Lastkombinationen" },
  { guides: ["none", "plus"], icon: "folder", text: "Schnittgrößen" },
  { guides: ["none", "tee"], icon: "folder", text: "Ergebnisse" },
  { guides: ["none", "tee"], icon: "folder", text: "Ausdruckprotokolle" },
  { guides: ["none", "plusEnd"], icon: "folder", text: "Hilfsobjekte" },
];

const GuideCell = ({ kind }: { kind: Guide }) => {
  const ends = kind.toLowerCase().includes("end");
  const box = kind.startsWith("plus") || kind.startsWith("minus");
  return (
    <svg width="19" height="18" viewBox="0 0 19 18" className="block shrink-0" aria-hidden="true" shapeRendering="crispEdges">
      {kind !== "none" && (
        <path d={ends ? "M9.500 0v10" : "M9.500 0v18"} stroke="#808080" strokeDasharray="1 1" />
      )}
      {kind !== "none" && kind !== "line" && <path d="M10 10.500h9" stroke="#808080" strokeDasharray="1 1" />}
      {box && (
        <g>
          <rect x="5.500" y="6.500" width="8" height="8" fill="#fff" stroke="#919191" />
          <path d="M7 10.500h5" stroke="#24409c" />
          {kind.startsWith("plus") && <path d="M9.500 8v5" stroke="#24409c" />}
        </g>
      )}
    </svg>
  );
};

const Tree = () => (
  <ul className="pt-px pl-0.5">
    {TREE.map((r) => (
      <li key={r.text} className="flex h-[18px] items-center">
        {r.guides.map((g, i) => (
          <GuideCell key={i} kind={g} />
        ))}
        <button type="button" className="flex items-center gap-[5px] pl-px whitespace-nowrap">
          <Icon name={r.icon} />
          <span className={r.bold ? "font-bold" : ""}>{r.text}</span>
        </button>
      </li>
    ))}
  </ul>
);

/* ---------- cross-section drawing ---------- */

const HANDLES = [
  [354, 155], [398, 155], [442, 155], [486, 155], [530, 155],
  [354, 170], [398, 170], [417, 170], [426, 170], [437, 170], [442, 170], [447, 170], [457, 170], [467, 170], [486, 170], [530, 170],
  [437, 162], [447, 162], [437, 180], [447, 180], [437, 191], [447, 191],
  [437, 330], [447, 330], [437, 497], [447, 497],
];

const Axes = ({ x, y, yColor, zColor }: { x: number; y: number; yColor: string; zColor: string }) => (
  <g>
    <path d={`M${x} ${y}h32`} stroke="#00f000" strokeWidth="2" />
    <path d={`M${x + 31} ${y - 2.5}l10 2.500-10 2.500z`} fill="#00a800" />
    <path d={`M${x} ${y}v32`} stroke="#0000e8" strokeWidth="2" />
    <path d={`M${x - 2.5} ${y + 31}l2.500 10 2.500-10z`} fill="#0000b0" />
    <circle cx={x} cy={y} r="2.500" fill="#d80000" stroke="#700" strokeWidth=".5" />
    <text x={x + 50} y={y + 3} fontSize="9" textAnchor="middle" fill={yColor}>Y</text>
    <text x={x} y={y + 54} fontSize="9" textAnchor="middle" fill={zColor}>Z</text>
  </g>
);

const Drawing = () => (
  <svg width="300" height="440" viewBox="292 110 300 440" className="block" role="img" aria-label="Querschnitt" fontFamily="Liberation Sans, sans-serif">
    <defs>
      <pattern id="hatchFlange" x="354" y="155" width="9" height="9" patternUnits="userSpaceOnUse">
        <path d="M-1 10L10-1M-1 1L1-1M8 10l2-2" stroke="#222" strokeWidth=".9" />
      </pattern>
      <pattern id="hatchWeb" x="437" y="191" width="7" height="7" patternUnits="userSpaceOnUse">
        <path d="M-1 8L8-1M-1 1L1-1M6 8l2-2" stroke="#444" strokeWidth=".7" />
      </pattern>
    </defs>
    <path
      d="M354 155h176v15h-63q-18 2-20 21h-10q-2-19-20-21h-63z"
      fill="url(#hatchFlange)"
      stroke="#a8a8a8"
      strokeWidth="1.200"
    />
    <path d="M437 191h10v306h-10z" fill="url(#hatchWeb)" stroke="#b0b0b0" strokeWidth="1.400" />
    <path d="M437.500 162v29M446.500 162v29M437 162.500h10" stroke="#b8b8b8" />
    <path d="M442 191v306M437 191h10" stroke="#9c9ca0" strokeWidth="3" />
    <path d="M467 162.500h63M467.500 155v15" stroke="#9c9ca0" strokeWidth="2" />
    <path d="M354 162.500h62M416 155v15" stroke="#f80000" strokeWidth="2.200" />
    {HANDLES.map(([x, y]) => (
      <rect key={`${x}-${y}`} x={x - 2} y={y - 2} width="4" height="4" fill="#20f0f8" />
    ))}
    {[[354, 162], [442, 162], [530, 162], [442, 497]].map(([x, y]) => (
      <circle key={`${x}-${y}`} cx={x} cy={y} r="1.800" fill="#800000" />
    ))}
    <Axes x={442} y={330} yColor="#20e020" zColor="#2020e0" />
    <Axes x={347} y={480} yColor="#60b060" zColor="#101060" />
  </svg>
);

/* ---------- parts table ---------- */

type Part = { el: string; start: boolean; end: boolean; dA: string; dE: string; c: string; t: string; ct: string };

const PARTS: Part[] = [
  { el: "1", start: false, end: true, dA: "0.0", dE: "14.8", c: "35.2", t: "8.5", ct: "4.141" },
  { el: "2", start: false, end: true, dA: "0.0", dE: "14.8", c: "35.2", t: "8.5", ct: "4.141" },
  { el: "5", start: true, end: false, dA: "16.2", dE: "0.0", c: "175.2", t: "5.6", ct: "31.295" },
];

const Check = ({ on, label }: { on: boolean; label: string }) => (
  <label className="grid h-[15px] place-items-center">
    <input
      type="checkbox"
      aria-label={label}
      defaultChecked={on}
      className="peer h-[11px] w-[11px] appearance-none border border-r-2 border-b-2 border-black bg-white [grid-area:1/1]"
    />
    <svg width="7" height="7" viewBox="0 0 7 7" className="pointer-events-none hidden peer-checked:block [grid-area:1/1]" aria-hidden="true">
      <path d="M.5 3L2.500 5.500 6.500 .5" stroke="#000" strokeWidth="1.600" fill="none" />
    </svg>
  </label>
);

const LETTERS = ["A", "B", "C", "D", "E", "F", "G", "H", "I"];
const LETTER = "h-[15px] border-r border-b border-t border-t-[#606060] border-[#808080] p-0 text-center font-normal";
const HEAD = "border-r border-[#a0a0a0] bg-[#f0f0f0] p-0 text-center font-normal";
const HEAD_B = "h-[17px] border-r border-b border-[#a0a0a0] bg-[#f0f0f0] p-0 pb-0.5 text-center font-normal";
const CELL = "h-4 overflow-hidden border-r border-b border-[#a0a0a0] p-0";
const NUM = CELL + " pr-1 text-right";

const PartsTable = () => (
  <table className="w-full table-fixed border-separate border-spacing-0 bg-white text-[11px] leading-[14px]">
    <colgroup>
      <col className="w-[46px]" />
      <col className="w-[192px]" />
      <col className="w-[72px]" />
      {[0, 1, 2, 3, 4, 5, 6].map((i) => (
        <col key={i} className="w-[60px]" />
      ))}
      <col />
    </colgroup>
    <thead>
      <tr>
        <th rowSpan={3} className="border border-[#808080] bg-[#e1e1e1] p-0 pt-1 text-center font-normal">
          c/t-Teil
          <br />
          Nr.
        </th>
        {LETTERS.map((l) => (
          <th key={l} scope="col" className={LETTER + (l === "A" ? " bg-[#0078d7] text-white" : " bg-[#e1e1e1]")}>
            {l}
          </th>
        ))}
        <th className={LETTER + " bg-[#e1e1e1]"} aria-label="leer" />
      </tr>
      <tr className="h-4">
        <th className={HEAD} />
        <th className={HEAD}>c/t-Teil</th>
        <th colSpan={2} className={HEAD}>Lagerung</th>
        <th colSpan={2} className={HEAD}>Abzugslänge [mm]</th>
        <th className={HEAD}>Breite</th>
        <th className={HEAD}>Dicke</th>
        <th className={HEAD}>Vorhanden</th>
        <th className={HEAD} />
      </tr>
      <tr>
        <th className={HEAD_B}>Elemente</th>
        <th className={HEAD_B}>Typ</th>
        <th className={HEAD_B}>Anfang</th>
        <th className={HEAD_B}>Ende</th>
        <th className={HEAD_B}>Δ<span className="text-[9px]">Anfang</span></th>
        <th className={HEAD_B}>Δ<span className="text-[9px]">Ende</span></th>
        <th className={HEAD_B}>c [mm]</th>
        <th className={HEAD_B}>t [mm]</th>
        <th className={HEAD_B}>c/t</th>
        <th className={HEAD_B} />
      </tr>
    </thead>
    <tbody>
      {Array.from({ length: 10 }, (_, i) => {
        const p = PARTS[i];
        const first = i === 0;
        const own = first ? " bg-[#ffffc0]" : " bg-white";
        const calc = first ? " bg-[#e6e6e6]" : " bg-[#f0f0f0]";
        return (
          <tr key={i}>
            <th
              scope="row"
              className={
                "h-4 border-r border-b border-l border-[#808080] p-0 text-center font-normal" +
                (first ? " bg-[#0078d7] text-white" : " bg-[#e1e1e1]")
              }
            >
              {i + 1}
            </th>
            <td className={CELL + own}>
              {first ? (
                <label className="flex h-[15px] items-center border border-[#10104c] pl-0.5">
                  <input aria-label="Elemente" defaultValue="1" className="block h-3 w-2 bg-[#0078d7] pl-px leading-3 text-white" />
                </label>
              ) : (
                <span className="pl-1">{p?.el}</span>
              )}
            </td>
            <td className={CELL + calc + " pl-[3px]"}>{p && "Gerade"}</td>
            <td className={CELL + own}>{p && <Check on={p.start} label={`Lagerung Anfang ${i + 1}`} />}</td>
            <td className={CELL + own}>{p && <Check on={p.end} label={`Lagerung Ende ${i + 1}`} />}</td>
            <td className={NUM + own}>{p?.dA}</td>
            <td className={NUM + own}>{p?.dE}</td>
            <td className={NUM + calc}>{p?.c}</td>
            <td className={NUM + own}>{p?.t}</td>
            <td className={NUM + calc}>{p?.ct}</td>
            <td className={CELL + own} />
          </tr>
        );
      })}
    </tbody>
  </table>
);

const TABS = ["Knoten", "Materialien", "Profile", "Elemente", "Punktelemente", "Schweißnähte"];

/* ---------- window ---------- */

export default function App() {
  return (
    <div className="flex min-h-screen flex-col overflow-hidden border-l border-[#2a3048] bg-[#cfd4dd] font-['Noto_Sans','Open_Sans',sans-serif] text-[11px] leading-[14px] text-black">
      <header className="flex h-[31px] shrink-0 items-center gap-[5px] border-t border-[#555] bg-white pl-2">
        <Icon name="app" />
        <h1>DUENQ 9.01.03 x64 - [2517-model-file*]</h1>
      </header>

      <nav className="flex h-6 shrink-0 items-center text-[#4b4f59]">
        <Grip />
        <Icon name="bridge" />
        <div className="flex gap-[15px] pl-[9px]">
          {MENU.map(([a, b, c]) => (
            <button key={a + b + c} type="button">
              {a}
              <span className="underline underline-offset-2">{b}</span>
              {c}
            </button>
          ))}
        </div>
      </nav>

      <div className="flex h-[26px] shrink-0 gap-px">
        <Bar>
          <Tools names={["new", "open", "archive", "save", "notes", "print", "preview"]} />
          <Sep />
          <Tools names={["undo", "redo", "selPar", "selEll", "selRing", "selPlus", "windows"]} />
          <Sep />
          <Tool name="listPane" label="Navigator" active />
          <Tool name="tablePane" label="Tabelle" active />
          <Sep />
          <Tool name="newLoad" />
          <Combo label="Lastfall" value="LF1 - N + M" />
          <Tools names={["prev", "next", "eye", "xxx"]} />
          <Sep />
          <Tools names={["glasses", "abacusWin", "abacus"]} />
        </Bar>
        <Bar>
          <Tools names={["gridHand", "gridSnap"]} />
          <Sep />
          <Tools names={["move", "rotate", "mirror", "explode", "info", "settings", "gears"]} />
        </Bar>
      </div>

      <div className="flex h-[26px] shrink-0 gap-px">
        <Bar>
          <Tools names={["nNode", "nLine", "nPoly"]} />
          <Drop />
          <Tools names={["nTriA", "nTriB", "nSec"]} />
          <Sep wide />
          <Tool name="nDim" />
          <Drop />
          <Tool name="nLabel" />
          <Sep />
          <Tool name="nGrid" />
        </Bar>
        <Bar>
          <Tools names={["pan", "zoomWin", "zoomX", "scale"]} />
          <Drop />
          <Tool name="section" />
        </Bar>
        <Bar>
          <Tools names={["su", "sv"]} />
          <Sep />
          <Tools names={["omega", "somega"]} />
          <Sep />
          <Tools names={["sigx", "tau", "sigv", "pct", "plastic"]} />
          <Drop />
          <Sep />
          <Tools names={["plate", "target", "report", "bracket", "colors"]} />
          <Drop />
          <Combo label="Stab" value="Stab: 1" />
          <Tools names={["prev", "next"]} />
          <Combo label="Stelle" value="Stelle: 0.0" />
          <Tools names={["prev", "next"]} />
        </Bar>
      </div>

      <main className="flex flex-1 pt-px">
        <aside className="flex w-[285px] shrink-0 flex-col">
          <div className="flex h-[18px] shrink-0 items-center bg-[#b9bfc9] pr-1 pl-1 text-[#4a4d55]">
            <h2 className="flex-1">Projekt-Navigator - Daten</h2>
            <button type="button" aria-label="Anheften" className="mr-1.5 flex w-3 justify-center">
              <svg width="9" height="9" viewBox="0 0 9 9" fill="none" stroke="#666" aria-hidden="true">
                <path d="M2.500 1h4v4h-4zM.5 5.500h8M4.500 5.500V9M5.500 1v4" />
              </svg>
            </button>
            <button type="button" aria-label="Schließen" className="flex w-3 justify-center">
              <svg width="9" height="9" viewBox="0 0 9 9" fill="none" stroke="#666" aria-hidden="true">
                <path d="M1 1l7 7M8 1L1 8" strokeWidth="1.300" />
              </svg>
            </button>
          </div>
          <div className="flex flex-1 border-r border-b border-[#9297a4] bg-[#e8ecf5] p-[3px] pr-0.5">
            <div className="flex-1 border-t border-l border-[#8b8f99] bg-[#fdfcf3]">
              <Tree />
            </div>
          </div>
          <div className="flex h-[23px] shrink-0 items-center gap-1 pb-0.5 text-[#4b4f59]">
            <button type="button" className="flex h-[19px] items-center gap-0.5 rounded-b border border-t-0 border-[#b8e4e8] bg-[#eef2f8] px-1">
              <Icon name="navData" />
              Daten
            </button>
            <button type="button" className="flex h-[19px] items-center gap-px px-1">
              <Icon name="navShow" />
              Zeigen
            </button>
            <button type="button" className="flex h-[19px] items-center gap-px px-1">
              <Icon name="navView" />
              Ansichten
            </button>
          </div>
        </aside>

        <section className="ml-1 flex min-w-0 flex-1 flex-col">
          <div className="min-h-0 flex-1 border-t-2 border-l-2 border-[#6a6d75] bg-white">
            <Drawing />
          </div>
          <div className="h-1 shrink-0" />
          <div className="shrink-0 bg-gradient-to-b from-[#ebeff8] to-[#d3d7e0]">
            <h2 className="flex h-5 items-center pl-1 text-[#4b4f59]">
              1.7 Querschnittsteile für Klassifizierung nach EN 1993-1
            </h2>
            <div className="flex h-[25px] items-center pb-0.5 pl-[9px]">
              <Tool name="tTri" active />
              <Tools names={["tIns", "tDown", "tChart", "bracket"]} />
              <Sep />
              <Tools names={["tLeft", "tRight"]} />
              <Sep />
              <Tool name="curveR" active />
              <Tool name="curveL" active />
              <Tool name="refresh" />
              <Sep />
              <Tools names={["gPlus", "gStar", "gPair"]} />
              <Sep />
              <Tool name="gX" />
              <Sep />
              <Tools names={["delRow", "rowL", "rowR"]} />
              <Sep />
              <Tools names={["tYellow", "tBlue"]} />
              <Sep />
              <Tool name="tEdit" />
              <Sep />
              <Tools names={["props", "glasses", "excel", "calc"]} />
              <Sep />
              <Tools names={["abEq", "fx", "xfx", "ct"]} />
            </div>
          </div>
          <div className="shrink-0 border-t-2 border-l-2 border-t-[#606060] border-l-[#808080] bg-[#f0f0f0] font-['Liberation_Sans',Arial,sans-serif]">
            <div className="border-b border-[#606060] pb-[15px] pl-px">
              <PartsTable />
            </div>
            <div role="tablist" className="-mt-px flex h-[18px] items-start">
              {TABS.map((t) => (
                <button
                  key={t}
                  type="button"
                  role="tab"
                  className="h-[17px] rounded-b border border-l-0 border-[#606060] bg-[#e4e4e4] px-[3px] whitespace-nowrap"
                >
                  {t}
                </button>
              ))}
              <button
                type="button"
                role="tab"
                aria-selected="true"
                className="h-[17px] rounded-b border-r-2 border-b-2 border-[#606060] bg-[#f4f4f4] pr-0.5 pl-[3px] whitespace-nowrap"
              >
                Querschnittsteile für Klassifizierung nach EN 1993-1
              </button>
            </div>
          </div>
          <p className="flex h-[18px] shrink-0 items-center bg-[#f0f0f0] pl-0.5">Geben Sie bitte die Elementnr. ein!</p>
        </section>
      </main>

      <footer className="h-[21px] shrink-0 border-t border-[#9a9ea8] bg-[linear-gradient(#dfe3eb,#b4bac6_45%,#a8adb6_46%,#b9bdc6)]" />
    </div>
  );
}
